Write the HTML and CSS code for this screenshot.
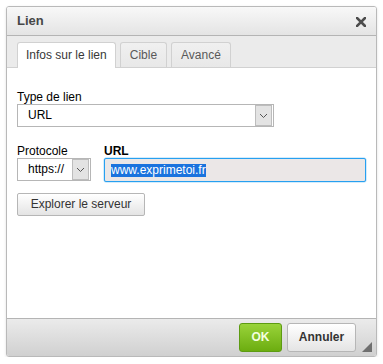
FILE: index.html
```html
<!DOCTYPE html>
<html lang="fr">
<head>
<meta charset="utf-8">
<title>Lien</title>
<link rel="stylesheet" href="styles.css">
</head>
<body>
<div class="dialog">
  <div class="title">
    <span class="title-text">Lien</span>
    <span class="close"><svg width="10" height="10" viewBox="0 0 10 10"><path d="M1 1 L9 9 M9 1 L1 9" stroke="#4d4d4d" stroke-width="2.6" stroke-linecap="square"/></svg></span>
  </div>
  <div class="tabs">
    <div class="tab active">Infos sur le lien</div>
    <div class="tab">Cible</div>
    <div class="tab">Avancé</div>
  </div>
  <div class="body">
    <div class="field">
      <div class="label">Type de lien</div>
      <div class="select wide"><span class="select-val">URL</span><span class="arrow"><svg width="9" height="6" viewBox="0 0 9 6"><path d="M1 1 L4.5 4.5 L8 1" fill="none" stroke="#555" stroke-width="1"/></svg></span></div>
    </div>
    <div class="row">
      <div class="field">
        <div class="label">Protocole</div>
        <div class="select proto"><span class="select-val">https://</span><span class="arrow"><svg width="9" height="6" viewBox="0 0 9 6"><path d="M1 1 L4.5 4.5 L8 1" fill="none" stroke="#555" stroke-width="1"/></svg></span></div>
      </div>
      <div class="field grow">
        <div class="label bold">URL</div>
        <div class="input"><span class="sel">www.exprimetoi.fr</span></div>
      </div>
    </div>
    <div class="btn">Explorer le serveur</div>
  </div>
  <div class="footer">
    <div class="fbtn ok">OK</div>
    <div class="fbtn cancel">Annuler</div>
    <span class="grip"></span>
  </div>
</div>
</body>
</html>
```
FILE: styles.css
```css
html, body {
  margin: 0;
  padding: 0;
  background: #ffffff;
}
body {
  font-family: "Liberation Sans", Arial, sans-serif;
  font-size: 12px;
  color: #000;
}
.dialog {
  margin: 6px 0 0 6px;
  width: 369px;
  height: 349px;
  border: 1px solid #b9b9b9;
  border-radius: 3px;
  box-shadow: 0 1px 3px rgba(0,0,0,0.12);
  display: flex;
  flex-direction: column;
  overflow: hidden;
  position: relative;
}
.title {
  height: 28px;
  border-bottom: 1px solid #b4b4b4;
  background: linear-gradient(#f8f8f8, #e4e4e4);
  display: flex;
  align-items: center;
  justify-content: space-between;
  padding: 0 10px 0 10px;
}
.title-text {
  font-size: 13px;
  font-weight: bold;
  color: #474747;
  line-height: 28px;
}
.close {
  display: flex;
  width: 10px;
  height: 10px;
  margin-top: 1px;
}
.tabs {
  height: 25px;
  padding: 6px 10px 0 10px;
  background: #ebebeb;
  border-bottom: 1px solid #d1d1d1;
  display: flex;
  gap: 4px;
  align-items: flex-start;
}
.tab {
  height: 25px;
  box-sizing: border-box;
  padding: 0 8px;
  line-height: 24px;
  border: 1px solid #d1d1d1;
  border-bottom: none;
  border-radius: 3px 3px 0 0;
  background: linear-gradient(#f0f0f0, #e8e8e8);
  color: #595959;
}
.tab + .tab {
  padding: 0 9px;
}
.tab.active {
  height: 26px;
  background: #ffffff;
  color: #383838;
  padding: 0 8px;
}
.body {
  height: 228px;
  padding: 22px 10px 0 10px;
  background: #ffffff;
  border-bottom: 1px solid #b4b4b4;
}
.field {
  display: flex;
  flex-direction: column;
}
.label {
  line-height: 14px;
  color: #000;
}
.label.bold {
  font-weight: bold;
}
.select {
  height: 23px;
  box-sizing: border-box;
  border: 1px solid #b6b6b6;
  background: #fff;
  display: flex;
  align-items: center;
  justify-content: space-between;
  padding: 0 1px 0 10px;
}
.select.wide {
  width: 257px;
}
.select.proto {
  width: 74px;
}
.select-val {
  line-height: 21px;
}
.arrow {
  width: 15px;
  height: 19px;
  background: #e3e3e3;
  border: 1px solid #bdbdbd;
  display: flex;
  align-items: center;
  justify-content: center;
}
.row {
  display: flex;
  gap: 13px;
  margin-top: 17px;
}
.grow {
  flex: 1;
}
.input {
  height: 24px;
  box-sizing: border-box;
  border: 1px solid #27a0f0;
  border-radius: 2px;
  background: #ebe7e7;
  display: flex;
  align-items: center;
  padding: 0 6px;
  box-shadow: 0 0 0 0.5px rgba(39,160,240,0.4);
}
.sel {
  background: #1a73de;
  color: #fff;
  line-height: 13px;
}
.btn {
  display: inline-block;
  margin-top: 11px;
  width: 128px;
  height: 23px;
  box-sizing: border-box;
  border: 1px solid #b6b6b6;
  border-radius: 2px;
  background: linear-gradient(#ffffff, #e4e4e4);
  text-align: center;
  line-height: 21px;
  color: #333;
}
.footer {
  flex: 1;
  background: linear-gradient(#ebebeb, #d0d0d0);
  display: flex;
  justify-content: flex-end;
  align-items: flex-start;
  gap: 5px;
  padding: 4px 20px 0 0;
  position: relative;
}
.fbtn {
  height: 29px;
  box-sizing: border-box;
  border-radius: 3px;
  font-weight: bold;
  line-height: 27px;
  text-align: center;
}
.ok {
  width: 43px;
  border: 1px solid #5d9b12;
  background: linear-gradient(#99d33a, #6cad10);
  color: #f4ffe0;
}
.cancel {
  width: 69px;
  border: 1px solid #b6b6b6;
  background: linear-gradient(#ffffff, #e4e4e4);
  color: #333;
}
.grip {
  position: absolute;
  right: 4px;
  bottom: 4px;
  width: 0;
  height: 0;
  border-left: 10px solid transparent;
  border-bottom: 10px solid #6f6f6f;
}
```
